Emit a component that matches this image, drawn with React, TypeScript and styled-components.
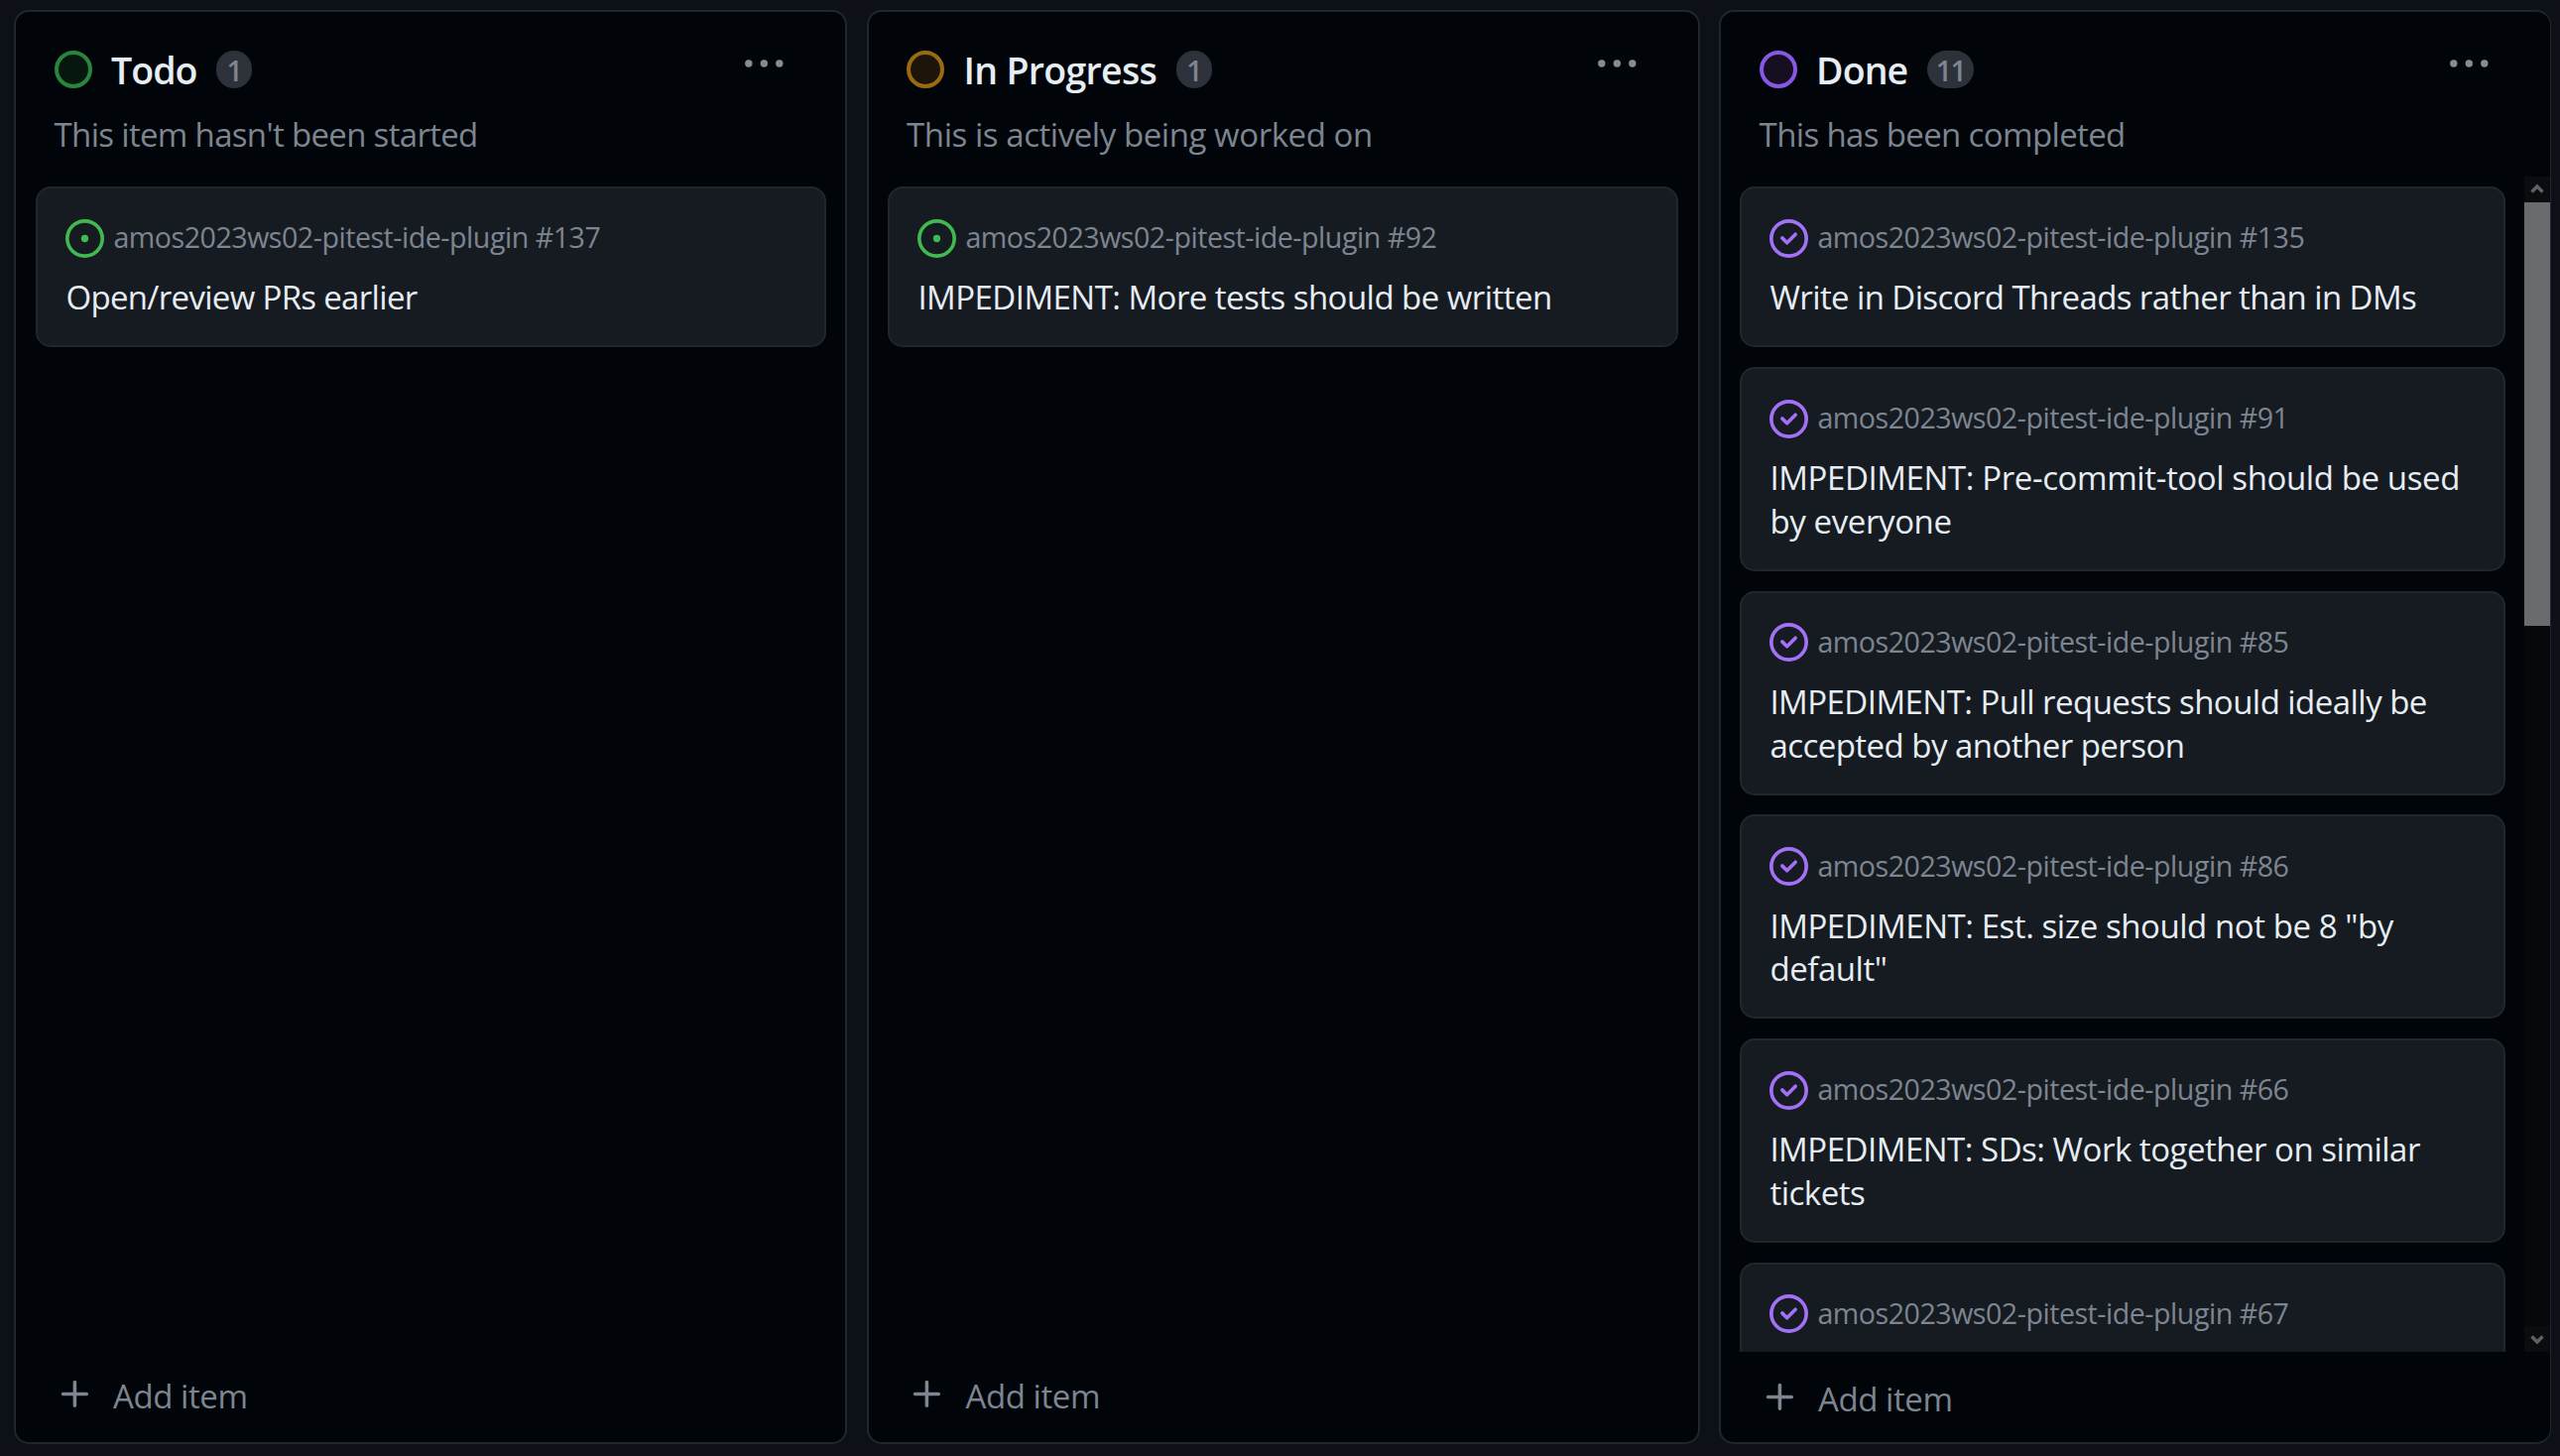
import React from "react";
import styled, { createGlobalStyle } from "styled-components";

const color = {
  page: "#0d1117",
  column: "#010409",
  card: "#161b22",
  line: "#21262d",
  text: "#e6edf3",
  muted: "#7d8590",
  open: "#3fb950",
  done: "#a371f7",
};

const GlobalStyle = createGlobalStyle`
  * { box-sizing: border-box; }
  html, body, #root { height: 100%; }
  body {
    margin: 0;
    overflow: hidden;
    background: ${color.page};
    color: ${color.text};
    font-family: "Open Sans", "Noto Sans", sans-serif;
    font-size: 33px;
    line-height: 43.7px;
  }
`;

const Board = styled.main`
  display: grid;
  grid-template-columns: 840px 840px 839px;
  column-gap: 19.5px;
  height: 100%;
  padding: 10px 0 12px 14px;
`;

const ColumnPanel = styled.section<{ $scrolls: boolean }>`
  display: flex;
  flex-direction: column;
  min-height: 0;
  background: ${color.column};
  border: 2px solid ${color.line};
  border-right-width: ${(p) => (p.$scrolls ? 1 : 2)}px;
  border-radius: 15px;
  overflow: hidden;
`;

const ColumnHeader = styled.header`
  flex: none;
  height: 166px;
  padding: 39px 62px 0 38.6px;
`;

const HeadingRow = styled.div`
  display: flex;
  align-items: center;
  gap: 19.5px;
  height: 38px;
`;

const StatusRing = styled.span<{ $stroke: string; $fill: string }>`
  flex: none;
  width: 38px;
  height: 38px;
  border: 4px solid ${(p) => p.$stroke};
  border-radius: 50%;
  background: ${(p) => p.$fill};
`;

const Heading = styled.h2<{ $tracking: number }>`
  margin: 0;
  padding-top: 2px;
  font-size: 37.5px;
  font-weight: 600;
  line-height: 38px;
  letter-spacing: ${(p) => p.$tracking}px;
  white-space: nowrap;
`;

const Counter = styled.span`
  display: flex;
  justify-content: center;
  min-width: 36px;
  height: 38px;
  padding: 0 9px;
  border-radius: 19px;
  background: #2d3139;
  color: ${color.muted};
  font-size: 28.5px;
  font-weight: 600;
  line-height: 41px;
  letter-spacing: -1.5px;
`;

const MenuButton = styled.button`
  display: flex;
  margin: 0 0 12px auto;
  padding: 0;
  border: 0;
  background: none;
  color: #848d97;
`;

const Description = styled.p<{ $tracking: number }>`
  margin: 25.4px 0 0;
  color: ${color.muted};
  letter-spacing: ${(p) => p.$tracking}px;
`;

const ListArea = styled.div`
  display: flex;
  flex: 1;
  min-height: 0;
`;

const CardList = styled.div<{ $left: number; $right: number }>`
  display: flex;
  flex: 1;
  flex-direction: column;
  gap: 19.67px;
  min-width: 0;
  padding: 10px ${(p) => p.$right}px 0 ${(p) => p.$left}px;
  overflow: hidden;
`;

const CardBox = styled.article`
  flex: none;
  min-height: 162.3px;
  padding: 30.5px 28px 26.1px 28.4px;
  background: ${color.card};
  border: 2px solid ${color.line};
  border-radius: 15px;
`;

const CardMeta = styled.div`
  display: flex;
  align-items: center;
  gap: 9px;
  height: 39.4px;
  color: ${color.muted};
`;

const Reference = styled.span`
  padding-bottom: 2px;
  font-size: 28.6px;
  letter-spacing: -0.48px;
  white-space: nowrap;
`;

const CardTitle = styled.h3<{ $tracking: number }>`
  margin: 18.6px 0 0;
  font-size: 33px;
  font-weight: 400;
  letter-spacing: ${(p) => p.$tracking}px;
`;

const Scrollbar = styled.div`
  display: flex;
  flex: none;
  flex-direction: column;
  width: 26px;
  background: #07080c;
`;

const ScrollButton = styled.div`
  display: flex;
  align-items: center;
  justify-content: center;
  height: 26px;
  background: #0b0c0f;
`;

const ScrollThumb = styled.div`
  height: 427px;
  margin-bottom: auto;
  background: #6a6b6e;
`;

const AddItem = styled.button<{ $scrolls: boolean }>`
  display: flex;
  flex: none;
  align-items: center;
  gap: 19.5px;
  height: 91px;
  padding: ${(p) => (p.$scrolls ? "4px" : "0")} 0 ${(p) => (p.$scrolls ? "0" : "2px")} 40.6px;
  border: 0;
  background: none;
  color: ${color.muted};
  font: inherit;
  letter-spacing: -0.45px;
`;

const PlusSvg = styled.svg`
  width: 38px;
  height: 38px;
  margin-bottom: 3px;
`;

const StateSvg = styled.svg`
  flex: none;
  width: 39px;
  height: 39px;
`;

const StateIcon = ({ closed }: { closed: boolean }) => (
  <StateSvg viewBox="0 0 16 16" fill={closed ? color.done : color.open}>
    {closed ? (
      <path d="M11.28 6.78a.75.75 0 0 0-1.06-1.06L7.25 8.69 5.78 7.22a.75.75 0 0 0-1.06 1.06l2 2a.75.75 0 0 0 1.06 0l3.5-3.5Z" />
    ) : (
      <circle cx="8" cy="8" r="1.5" />
    )}
    <path d="M16 8A8 8 0 1 1 0 8a8 8 0 0 1 16 0Zm-1.5 0a6.5 6.5 0 1 0-13 0 6.5 6.5 0 0 0 13 0Z" />
  </StateSvg>
);

const PlusIcon = () => (
  <PlusSvg viewBox="0 0 16 16" fill="currentColor">
    <path d="M7.75 2a.75.75 0 0 1 .75.75V7h4.25a.75.75 0 0 1 0 1.5H8.5v4.25a.75.75 0 0 1-1.5 0V8.5H2.75a.75.75 0 0 1 0-1.5H7V2.75A.75.75 0 0 1 7.75 2Z" />
  </PlusSvg>
);

const DotsIcon = () => (
  <svg width="38.6" height="8" viewBox="0 0 38.6 8" fill="currentColor">
    <circle cx="3.8" cy="4" r="3.7" />
    <circle cx="19.3" cy="4" r="3.7" />
    <circle cx="34.8" cy="4" r="3.7" />
  </svg>
);

const Chevron = ({ down }: { down?: boolean }) => (
  <svg width="14" height="12" viewBox="0 0 14 12" fill="none" stroke="#606164" strokeWidth="3.4">
    <path d={down ? "M1.5 3.5 7 9l5.5-5.5" : "M1.5 8.5 7 3l5.5 5.5"} />
  </svg>
);

type Item = { number: number; title?: string; tracking?: number };

type Column = {
  name: string;
  tracking: number;
  count: number;
  description: string;
  descriptionTracking: number;
  stroke: string;
  fill: string;
  closed: boolean;
  scrolls: boolean;
  left: number;
  right: number;
  items: Item[];
};

const columns: Column[] = [
  {
    name: "Todo",
    tracking: -1,
    count: 1,
    description: "This item hasn't been started",
    descriptionTracking: -0.68,
    stroke: "#2a843c",
    fill: "#06180e",
    closed: false,
    scrolls: false,
    left: 20,
    right: 19,
    items: [{ number: 137, title: "Open/review PRs earlier", tracking: -0.68 }],
  },
  {
    name: "In Progress",
    tracking: -0.7,
    count: 1,
    description: "This is actively being worked on",
    descriptionTracking: -0.44,
    stroke: "#9a6a10",
    fill: "#1d150a",
    closed: false,
    scrolls: false,
    left: 19.5,
    right: 20,
    items: [{ number: 92, title: "IMPEDIMENT: More tests should be written", tracking: -0.54 }],
  },
  {
    name: "Done",
    tracking: -0.9,
    count: 11,
    description: "This has been completed",
    descriptionTracking: -0.64,
    stroke: "#8957e5",
    fill: "#150f21",
    closed: true,
    scrolls: true,
    left: 19,
    right: 19,
    items: [
      { number: 135, title: "Write in Discord Threads rather than in DMs", tracking: -0.6 },
      { number: 91, title: "IMPEDIMENT: Pre-commit-tool should be used by everyone", tracking: -0.39 },
      { number: 85, title: "IMPEDIMENT: Pull requests should ideally be accepted by another person", tracking: -0.54 },
      { number: 86, title: 'IMPEDIMENT: Est. size should not be 8 "by default"', tracking: -0.44 },
      { number: 66, title: "IMPEDIMENT: SDs: Work together on similar tickets", tracking: -0.49 },
      { number: 67 },
    ],
  },
];

const Card = ({ item, closed }: { item: Item; closed: boolean }) => (
  <CardBox>
    <CardMeta>
      <StateIcon closed={closed} />
      <Reference>amos2023ws02-pitest-ide-plugin #{item.number}</Reference>
    </CardMeta>
    {item.title && <CardTitle $tracking={item.tracking ?? -0.5}>{item.title}</CardTitle>}
  </CardBox>
);

const BoardColumn = ({ column }: { column: Column }) => (
  <ColumnPanel $scrolls={column.scrolls}>
    <ColumnHeader>
      <HeadingRow>
        <StatusRing $stroke={column.stroke} $fill={column.fill} />
        <Heading $tracking={column.tracking}>{column.name}</Heading>
        <Counter>{column.count}</Counter>
        <MenuButton>
          <DotsIcon />
        </MenuButton>
      </HeadingRow>
      <Description $tracking={column.descriptionTracking}>{column.description}</Description>
    </ColumnHeader>
    <ListArea>
      <CardList $left={column.left} $right={column.right}>
        {column.items.map((item) => (
          <Card key={item.number} item={item} closed={column.closed} />
        ))}
      </CardList>
      {column.scrolls && (
        <Scrollbar>
          <ScrollButton>
            <Chevron />
          </ScrollButton>
          <ScrollThumb />
          <ScrollButton>
            <Chevron down />
          </ScrollButton>
        </Scrollbar>
      )}
    </ListArea>
    <AddItem $scrolls={column.scrolls}>
      <PlusIcon />
      Add item
    </AddItem>
  </ColumnPanel>
);

export default function App() {
  return (
    <>
      <GlobalStyle />
      <Board>
        {columns.map((column) => (
          <BoardColumn key={column.name} column={column} />
        ))}
      </Board>
    </>
  );
}
